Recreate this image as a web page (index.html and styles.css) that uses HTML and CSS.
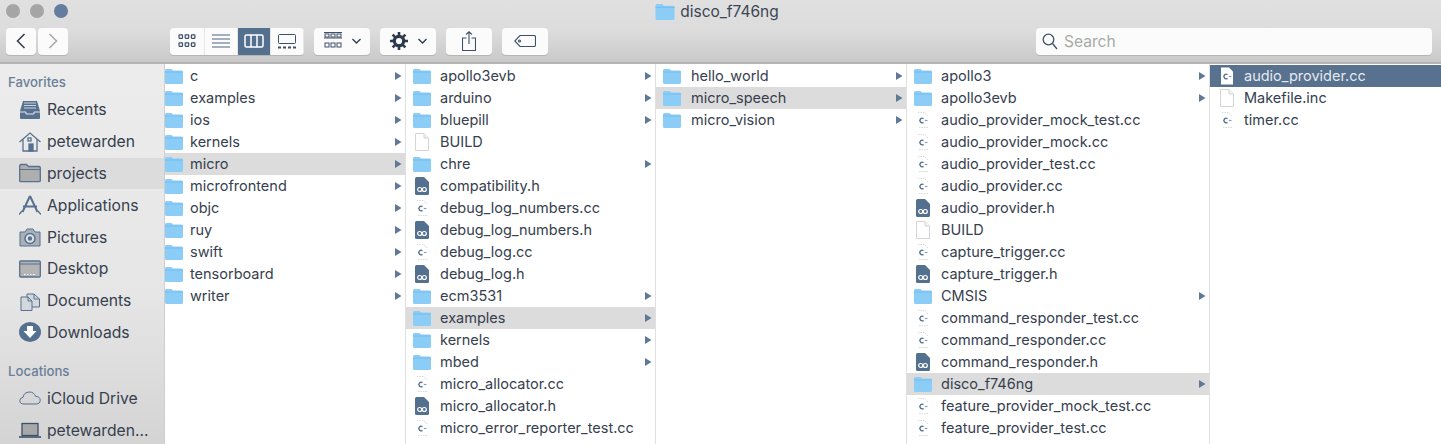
FILE: index.html
```html
<!DOCTYPE html>
<html lang="en">
<head>
    <meta charset="UTF-8">
    <title>disco_f746ng</title>
    <link rel="stylesheet" href="styles.css">
</head>
<body>
    <svg class="defs" width="0" height="0">
        <symbol id="folder" viewBox="0 0 18 16"><path d="M0 2.500Q0 1 1.500 1H6Q7 1 7.600 2L8 2.500H16.500Q18 2.500 18 4V14.500Q18 16 16.500 16H1.500Q0 16 0 14.500Z" fill="#8ccdf7"/><path d="M0 4H18" stroke="#74bdee" stroke-width="1"/></symbol>
        <symbol id="doc" viewBox="0 0 18 18"><path d="M2.500.5H11L15.500 5V17.500H2.500Z" fill="#fff" stroke="#d5d5d5"/><path d="M11 .5V5H15.500" fill="#f2f2f2" stroke="#d5d5d5"/></symbol>
        <symbol id="cc" viewBox="0 0 18 18"><path d="M4 1.500H10.500L14 5M14 16.500H4" fill="none" stroke="#d9d9d9" stroke-dasharray="1.500 1"/><path d="M9.500 7.600A2.300 2.300 0 1 0 9.500 11.400" fill="none" stroke="#55708f" stroke-width="1.400"/><path d="M10.800 9.500H13.500" stroke="#8ba0b8" stroke-width="1.200"/></symbol>
        <symbol id="ccsel" viewBox="0 0 18 18"><path d="M3 .5H11L15 4.500V17.500H3Z" fill="#fff"/><path d="M9.500 7.600A2.300 2.300 0 1 0 9.500 11.400" fill="none" stroke="#55708f" stroke-width="1.400"/><path d="M10.800 9.500H13.500" stroke="#8ba0b8" stroke-width="1.200"/></symbol>
        <symbol id="hdr" viewBox="0 0 18 18"><path d="M2 1.500Q2 0 3.500 0H11L16 5V16.500Q16 18 14.500 18H3.500Q2 18 2 16.500Z" fill="#54708f"/><g fill="none" stroke="#fff" stroke-width="1.200"><circle cx="6.700" cy="12.500" r="2"/><circle cx="11.300" cy="12.500" r="2"/></g></symbol>
        <symbol id="arrow" viewBox="0 0 8 10"><path d="M1 1L7.500 5L1 9Z" fill="#5f7895"/></symbol>
    </svg>

    <header class="toolbar">
        <div class="titlebar">
            <div class="lights">
                <span class="light"></span>
                <span class="light"></span>
                <span class="light light-blue"></span>
            </div>
            <div class="title">
                <svg class="title-icon"><use href="#folder"/></svg>
                <span>disco_f746ng</span>
            </div>
        </div>
        <div class="tools">
            <div class="nav">
                <button class="btn btn-nav"><svg width="12" height="18" viewBox="0 0 12 18"><path d="M9.500 2L2.500 9L9.500 16" fill="none" stroke="#2c3a4c" stroke-width="1.500"/></svg></button>
                <button class="btn btn-nav"><svg width="12" height="18" viewBox="0 0 12 18"><path d="M2.500 2L9.500 9L2.500 16" fill="none" stroke="#a8a8a8" stroke-width="1.500"/></svg></button>
            </div>
            <div class="views">
                <button class="view"><svg width="18" height="14" viewBox="0 0 18 14" fill="none" stroke="#3e5068" stroke-width="1.200"><rect x="1" y=".8" width="3.500" height="3.500" rx=".5"/><rect x="7.200" y=".8" width="3.500" height="3.500" rx=".5"/><rect x="13.400" y=".8" width="3.500" height="3.500" rx=".5"/><rect x="1" y="8.800" width="3.500" height="3.500" rx=".5"/><rect x="7.200" y="8.800" width="3.500" height="3.500" rx=".5"/><rect x="13.400" y="8.800" width="3.500" height="3.500" rx=".5"/></svg></button>
                <button class="view"><svg width="18" height="14" viewBox="0 0 18 14" stroke="#4d6480" stroke-width="1.200"><path d="M0 1H18M0 5H18M0 9H18M0 13H18"/></svg></button>
                <button class="view view-active"><svg width="20" height="14" viewBox="0 0 20 14" fill="none" stroke="#fff" stroke-width="1.500"><rect x="1" y="1" width="18" height="12" rx="1.500"/><path d="M7 1V13M13 1V13"/></svg></button>
                <button class="view"><svg width="18" height="15" viewBox="0 0 18 15" fill="none" stroke="#3e5068"><rect x=".5" y=".5" width="17" height="9" rx="1"/><path d="M0 13.500H3M5 13.500H8M10 13.500H13M15 13.500H18" stroke-width="2"/></svg></button>
            </div>
            <button class="btn btn-menu">
                <svg width="18" height="18" viewBox="0 0 18 18" fill="none" stroke="#3e5068"><path d="M0 .5H18M0 6H18"/><rect x="1" y="2" width="4" height="3"/><rect x="7" y="2" width="4" height="3"/><rect x="13" y="2" width="4" height="3"/><rect x="1" y="11" width="4" height="4"/><rect x="7" y="11" width="4" height="4"/><rect x="13" y="11" width="4" height="4"/></svg>
                <svg class="chev" width="9" height="6" viewBox="0 0 9 6"><path d="M.5 1L4.500 5L8.500 1" fill="none" stroke="#2c3a4c" stroke-width="1.300"/></svg>
            </button>
            <button class="btn btn-menu">
                <svg width="18" height="18" viewBox="0 0 18 18"><circle cx="9" cy="9" r="4.700" fill="none" stroke="#2c3a4c" stroke-width="3.200"/><path d="M9 0V18M0 9H18M2.600 2.600L15.400 15.400M15.400 2.600L2.600 15.400" stroke="#2c3a4c" stroke-width="2.600" stroke-dasharray="3.200 11.600"/></svg>
                <svg class="chev" width="9" height="6" viewBox="0 0 9 6"><path d="M.5 1L4.500 5L8.500 1" fill="none" stroke="#2c3a4c" stroke-width="1.300"/></svg>
            </button>
            <button class="btn btn-icon"><svg width="14" height="20" viewBox="0 0 14 20" fill="none" stroke="#3e5068" stroke-width="1.100"><path d="M4.500 7H.5V19.500H13.500V7H9.500M7 13V1M4 3.500L7 .8L10 3.500"/></svg></button>
            <button class="btn btn-icon"><svg width="22" height="12" viewBox="0 0 22 12" fill="none" stroke="#3e5068" stroke-width="1.100"><path d="M6 .5H20Q21.500 .5 21.500 2V10Q21.500 11.500 20 11.500H6L.8 6Z"/><circle cx="5.500" cy="6" r="1"/></svg></button>
            <label class="search">
                <svg width="16" height="17" viewBox="0 0 16 17" fill="none" stroke="#3e5068" stroke-width="1.300"><circle cx="6.500" cy="6.500" r="5.300"/><path d="M10.500 10.500L15 16"/></svg>
                <span>Search</span>
            </label>
        </div>
    </header>

    <main class="finder">
        <nav class="sidebar">
            <h2 class="side-head">Favorites</h2>
            <a class="side-item">
                <svg class="side-icon" viewBox="0 0 22 20"><path d="M4 1H18L21 11V18Q21 19 20 19H2Q1 19 1 18V11Z" fill="#57718f"/><path d="M5 3H17M5 5.500H17M5 8H17" stroke="#c9d2dc"/><path d="M1 12H7V14H15V12H21" fill="none" stroke="#e3e7ec"/></svg>
                <span>Recents</span>
            </a>
            <a class="side-item">
                <svg class="side-icon" viewBox="0 0 22 20" fill="none" stroke="#57718f" stroke-width="1.300"><path d="M.5 10L11 1L21.500 10M4 7.500V19H18V7.500"/><rect x="10" y="12" width="4" height="7" fill="#57718f"/><rect x="9" y="6" width="3" height="3"/></svg>
                <span>petewarden</span>
            </a>
            <a class="side-item side-item-active">
                <svg class="side-icon" viewBox="0 0 22 20"><path d="M.7 3Q.7 1.500 2 1.500H7.500L9.500 3.500H20Q21.300 3.500 21.300 5V17.500Q21.300 18.700 20 18.700H2Q.7 18.700 .7 17.500Z" fill="#aeaeae" stroke="#57718f" stroke-width="1.300"/><path d="M1 6.500H21" stroke="#57718f"/></svg>
                <span>projects</span>
            </a>
            <a class="side-item">
                <svg class="side-icon" viewBox="0 0 22 20" fill="none" stroke="#57718f" stroke-width="2"><path d="M11 1L18.500 17M11 1L3.500 17M4 11.500H18"/><path d="M0 19.500L3 16M22 19.500L19 16" stroke-width="1.400"/></svg>
                <span>Applications</span>
            </a>
            <a class="side-item">
                <svg class="side-icon" viewBox="0 0 22 20"><path d="M1 5H6L8 2H14L16 5H21V19H1Z" fill="#aab0b8" stroke="#57718f"/><circle cx="11" cy="11.500" r="5" fill="#dfe3e8" stroke="#57718f" stroke-width="1.500"/><circle cx="11" cy="11.500" r="2.200" fill="#57718f"/></svg>
                <span>Pictures</span>
            </a>
            <a class="side-item">
                <svg class="side-icon" viewBox="0 0 22 20"><rect x=".7" y="2" width="20.600" height="16" rx="1" fill="#b4b4b4" stroke="#57718f" stroke-width="1.300"/><path d="M1 5H21" stroke="#57718f"/><path d="M5 15.500H17" stroke="#fff" stroke-dasharray="1.500 1.500"/></svg>
                <span>Desktop</span>
            </a>
            <a class="side-item">
                <svg class="side-icon" viewBox="0 0 22 20" fill="#d4d8dd" stroke="#57718f"><path d="M8 3H15L20.500 8V16H8Z"/><path d="M2 6H9L13 10V19.500H2Z"/><path d="M15 3V8H20.500M9 6V10H13" fill="none"/></svg>
                <span>Documents</span>
            </a>
            <a class="side-item">
                <svg class="side-icon" viewBox="0 0 22 20"><ellipse cx="11" cy="10" rx="11" ry="10" fill="#54708f"/><path d="M8 4H14V9H17.500L11 16L4.500 9H8Z" fill="#fff"/></svg>
                <span>Downloads</span>
            </a>
            <h2 class="side-head side-head-gap">Locations</h2>
            <a class="side-item">
                <svg class="side-icon" viewBox="0 0 22 20"><path d="M5 16Q.8 16 .8 12.700Q.8 9.800 4 9.300Q5 4 10.500 4Q15 4 16.500 8.300Q21.200 8.500 21.200 12.300Q21.200 16 17 16Z" fill="#d6d6d6" stroke="#57718f"/></svg>
                <span>iCloud Drive</span>
            </a>
            <a class="side-item">
                <svg class="side-icon" viewBox="0 0 22 20"><rect x="3" y="3.500" width="16" height="12" fill="#a8a8a8" stroke="#3e5068" stroke-width="1.300"/><path d="M0 17H22" stroke="#3e5068" stroke-width="1.600"/></svg>
                <span>petewarden...</span>
            </a>
        </nav>

        <section class="column col-1">
            <div class="row"><svg class="ico"><use href="#folder"/></svg><span>c</span><svg class="arr"><use href="#arrow"/></svg></div>
            <div class="row"><svg class="ico"><use href="#folder"/></svg><span>examples</span><svg class="arr"><use href="#arrow"/></svg></div>
            <div class="row"><svg class="ico"><use href="#folder"/></svg><span>ios</span><svg class="arr"><use href="#arrow"/></svg></div>
            <div class="row"><svg class="ico"><use href="#folder"/></svg><span>kernels</span><svg class="arr"><use href="#arrow"/></svg></div>
            <div class="row row-open"><svg class="ico"><use href="#folder"/></svg><span>micro</span><svg class="arr"><use href="#arrow"/></svg></div>
            <div class="row"><svg class="ico"><use href="#folder"/></svg><span>microfrontend</span><svg class="arr"><use href="#arrow"/></svg></div>
            <div class="row"><svg class="ico"><use href="#folder"/></svg><span>objc</span><svg class="arr"><use href="#arrow"/></svg></div>
            <div class="row"><svg class="ico"><use href="#folder"/></svg><span>ruy</span><svg class="arr"><use href="#arrow"/></svg></div>
            <div class="row"><svg class="ico"><use href="#folder"/></svg><span>swift</span><svg class="arr"><use href="#arrow"/></svg></div>
            <div class="row"><svg class="ico"><use href="#folder"/></svg><span>tensorboard</span><svg class="arr"><use href="#arrow"/></svg></div>
            <div class="row"><svg class="ico"><use href="#folder"/></svg><span>writer</span><svg class="arr"><use href="#arrow"/></svg></div>
        </section>

        <section class="column col-2">
            <div class="row"><svg class="ico"><use href="#folder"/></svg><span>apollo3evb</span><svg class="arr"><use href="#arrow"/></svg></div>
            <div class="row"><svg class="ico"><use href="#folder"/></svg><span>arduino</span><svg class="arr"><use href="#arrow"/></svg></div>
            <div class="row"><svg class="ico"><use href="#folder"/></svg><span>bluepill</span><svg class="arr"><use href="#arrow"/></svg></div>
            <div class="row"><svg class="ico"><use href="#doc"/></svg><span>BUILD</span></div>
            <div class="row"><svg class="ico"><use href="#folder"/></svg><span>chre</span><svg class="arr"><use href="#arrow"/></svg></div>
            <div class="row"><svg class="ico"><use href="#hdr"/></svg><span>compatibility.h</span></div>
            <div class="row"><svg class="ico"><use href="#cc"/></svg><span>debug_log_numbers.cc</span></div>
            <div class="row"><svg class="ico"><use href="#hdr"/></svg><span>debug_log_numbers.h</span></div>
            <div class="row"><svg class="ico"><use href="#cc"/></svg><span>debug_log.cc</span></div>
            <div class="row"><svg class="ico"><use href="#hdr"/></svg><span>debug_log.h</span></div>
            <div class="row"><svg class="ico"><use href="#folder"/></svg><span>ecm3531</span><svg class="arr"><use href="#arrow"/></svg></div>
            <div class="row row-open"><svg class="ico"><use href="#folder"/></svg><span>examples</span><svg class="arr"><use href="#arrow"/></svg></div>
            <div class="row"><svg class="ico"><use href="#folder"/></svg><span>kernels</span><svg class="arr"><use href="#arrow"/></svg></div>
            <div class="row"><svg class="ico"><use href="#folder"/></svg><span>mbed</span><svg class="arr"><use href="#arrow"/></svg></div>
            <div class="row"><svg class="ico"><use href="#cc"/></svg><span>micro_allocator.cc</span></div>
            <div class="row"><svg class="ico"><use href="#hdr"/></svg><span>micro_allocator.h</span></div>
            <div class="row"><svg class="ico"><use href="#cc"/></svg><span>micro_error_reporter_test.cc</span></div>
        </section>

        <section class="column col-3">
            <div class="row"><svg class="ico"><use href="#folder"/></svg><span>hello_world</span><svg class="arr"><use href="#arrow"/></svg></div>
            <div class="row row-open"><svg class="ico"><use href="#folder"/></svg><span>micro_speech</span><svg class="arr"><use href="#arrow"/></svg></div>
            <div class="row"><svg class="ico"><use href="#folder"/></svg><span>micro_vision</span><svg class="arr"><use href="#arrow"/></svg></div>
        </section>

        <section class="column col-4">
            <div class="row"><svg class="ico"><use href="#folder"/></svg><span>apollo3</span><svg class="arr"><use href="#arrow"/></svg></div>
            <div class="row"><svg class="ico"><use href="#folder"/></svg><span>apollo3evb</span><svg class="arr"><use href="#arrow"/></svg></div>
            <div class="row"><svg class="ico"><use href="#cc"/></svg><span>audio_provider_mock_test.cc</span></div>
            <div class="row"><svg class="ico"><use href="#cc"/></svg><span>audio_provider_mock.cc</span></div>
            <div class="row"><svg class="ico"><use href="#cc"/></svg><span>audio_provider_test.cc</span></div>
            <div class="row"><svg class="ico"><use href="#cc"/></svg><span>audio_provider.cc</span></div>
            <div class="row"><svg class="ico"><use href="#hdr"/></svg><span>audio_provider.h</span></div>
            <div class="row"><svg class="ico"><use href="#doc"/></svg><span>BUILD</span></div>
            <div class="row"><svg class="ico"><use href="#cc"/></svg><span>capture_trigger.cc</span></div>
            <div class="row"><svg class="ico"><use href="#hdr"/></svg><span>capture_trigger.h</span></div>
            <div class="row"><svg class="ico"><use href="#folder"/></svg><span>CMSIS</span><svg class="arr"><use href="#arrow"/></svg></div>
            <div class="row"><svg class="ico"><use href="#cc"/></svg><span>command_responder_test.cc</span></div>
            <div class="row"><svg class="ico"><use href="#cc"/></svg><span>command_responder.cc</span></div>
            <div class="row"><svg class="ico"><use href="#hdr"/></svg><span>command_responder.h</span></div>
            <div class="row row-open"><svg class="ico"><use href="#folder"/></svg><span>disco_f746ng</span><svg class="arr"><use href="#arrow"/></svg></div>
            <div class="row"><svg class="ico"><use href="#cc"/></svg><span>feature_provider_mock_test.cc</span></div>
            <div class="row"><svg class="ico"><use href="#cc"/></svg><span>feature_provider_test.cc</span></div>
        </section>

        <section class="column col-5">
            <div class="row row-selected"><svg class="ico"><use href="#ccsel"/></svg><span>audio_provider.cc</span></div>
            <div class="row"><svg class="ico"><use href="#doc"/></svg><span>Makefile.inc</span></div>
            <div class="row"><svg class="ico"><use href="#cc"/></svg><span>timer.cc</span></div>
        </section>
    </main>
</body>
</html>
```
FILE: styles.css
```css
* {
    box-sizing: border-box;
}

html, body {
    margin: 0;
    padding: 0;
    height: 444px;
    overflow: hidden;
}

body {
    font-family: Inter, "Liberation Sans", sans-serif;
    font-size: 14.500px;
    color: #36404e;
    background-color: white;
}

.defs {
    display: block;
    height: 0;
}

.toolbar {
    height: 64px;
    padding: 0 9px 0 6px;
    background: linear-gradient(#e0e0e0, #dcdcdc 50%, #c9c9c9);
    border-bottom: 2px solid #b4b4b4;
}

.titlebar {
    display: grid;
    grid-template-columns: 1fr auto 1fr;
    align-items: center;
    height: 22px;
}

.lights {
    display: flex;
    gap: 10px;
}

.light {
    width: 14px;
    height: 14px;
    border-radius: 50%;
    background-color: #a5a5a5;
}

.light-blue {
    background-color: #627d9e;
}

.title {
    display: flex;
    align-items: center;
    gap: 5px;
    padding-right: 4px;
    font-size: 15.500px;
    color: #3c4654;
}

.title-icon {
    width: 20px;
    height: 17px;
}

.tools {
    display: flex;
    align-items: center;
    height: 28px;
    margin-top: 5px;
}

.btn, .view {
    display: flex;
    align-items: center;
    justify-content: center;
    padding: 0;
    border: 0;
    background-color: #fbfbfb;
}

.btn {
    height: 27px;
    border-radius: 4px;
    box-shadow: 0 1px 0 #b5b5b5;
}

.nav {
    display: flex;
    gap: 2px;
    margin-right: 102px;
}

.btn-nav {
    width: 30px;
}

.views {
    display: flex;
    height: 27px;
    margin-right: 10px;
    border-radius: 4px;
    overflow: hidden;
    box-shadow: 0 1px 0 #b5b5b5;
}

.view {
    width: 33px;
    height: 27px;
    border-right: 1px solid #e6e6e6;
}

.view:first-child {
    width: 35px;
}

.view-active {
    background-color: #54708f;
}

.btn-menu {
    gap: 10px;
    width: 56px;
    margin-right: 10px;
}

.btn-icon {
    width: 46px;
    margin-right: 10px;
}

.search {
    display: flex;
    align-items: center;
    gap: 6px;
    width: 396px;
    height: 27px;
    margin-left: auto;
    padding-left: 6px;
    background-color: #fbfbfb;
    border-radius: 4px;
    box-shadow: 0 1px 0 #b5b5b5;
    font-size: 15.600px;
    color: #a9a9a9;
}

.finder {
    display: flex;
    height: 380px;
    overflow: hidden;
}

.sidebar {
    flex: none;
    width: 165px;
    padding-top: 9px;
    background: linear-gradient(#ececec, #e6e6e6 60%, #d4d4d4);
    border-right: 1px solid #cfcfcf;
}

.side-head {
    margin: 0 0 3px;
    padding-left: 8px;
    font-size: 13.200px;
    font-weight: 500;
    line-height: 18px;
    color: #6a7f98;
}

.side-head-gap {
    margin-top: 14px;
    margin-bottom: 2px;
}

.side-item {
    display: flex;
    align-items: center;
    gap: 6px;
    height: 31.800px;
    padding-left: 19px;
    font-size: 15.700px;
    color: #36404e;
}

.side-item-active {
    background-color: #dcdcdc;
}

.side-icon {
    flex: none;
    width: 22px;
    height: 20px;
}

.column {
    flex: none;
    padding-top: 1px;
    border-right: 1px solid #e0e0e0;
}

.col-1 {
    width: 241px;
}

.col-2 {
    width: 250px;
}

.col-3 {
    width: 251px;
}

.col-4 {
    width: 303px;
}

.col-5 {
    flex: 1;
    border-right: 0;
}

.row {
    display: flex;
    align-items: center;
    height: 22px;
    padding: 0 0 1px 7px;
    white-space: nowrap;
}

.row span {
    flex: 1;
    margin-left: 9px;
}

.col-1 .row {
    padding-left: 0;
}

.col-1 .row span {
    margin-left: 7px;
}

.col-3 .row span {
    margin-left: 10px;
}

.col-5 .row {
    padding-left: 8px;
}

.col-5 .row span {
    margin-left: 8px;
}

.row-open {
    background-color: #dcdcdc;
}

.row-selected {
    background-color: #57718f;
    color: #e4e9ef;
}

.ico {
    flex: none;
    width: 18px;
    height: 18px;
}

.arr {
    flex: none;
    width: 8px;
    height: 10px;
    margin-right: 3px;
}
```
